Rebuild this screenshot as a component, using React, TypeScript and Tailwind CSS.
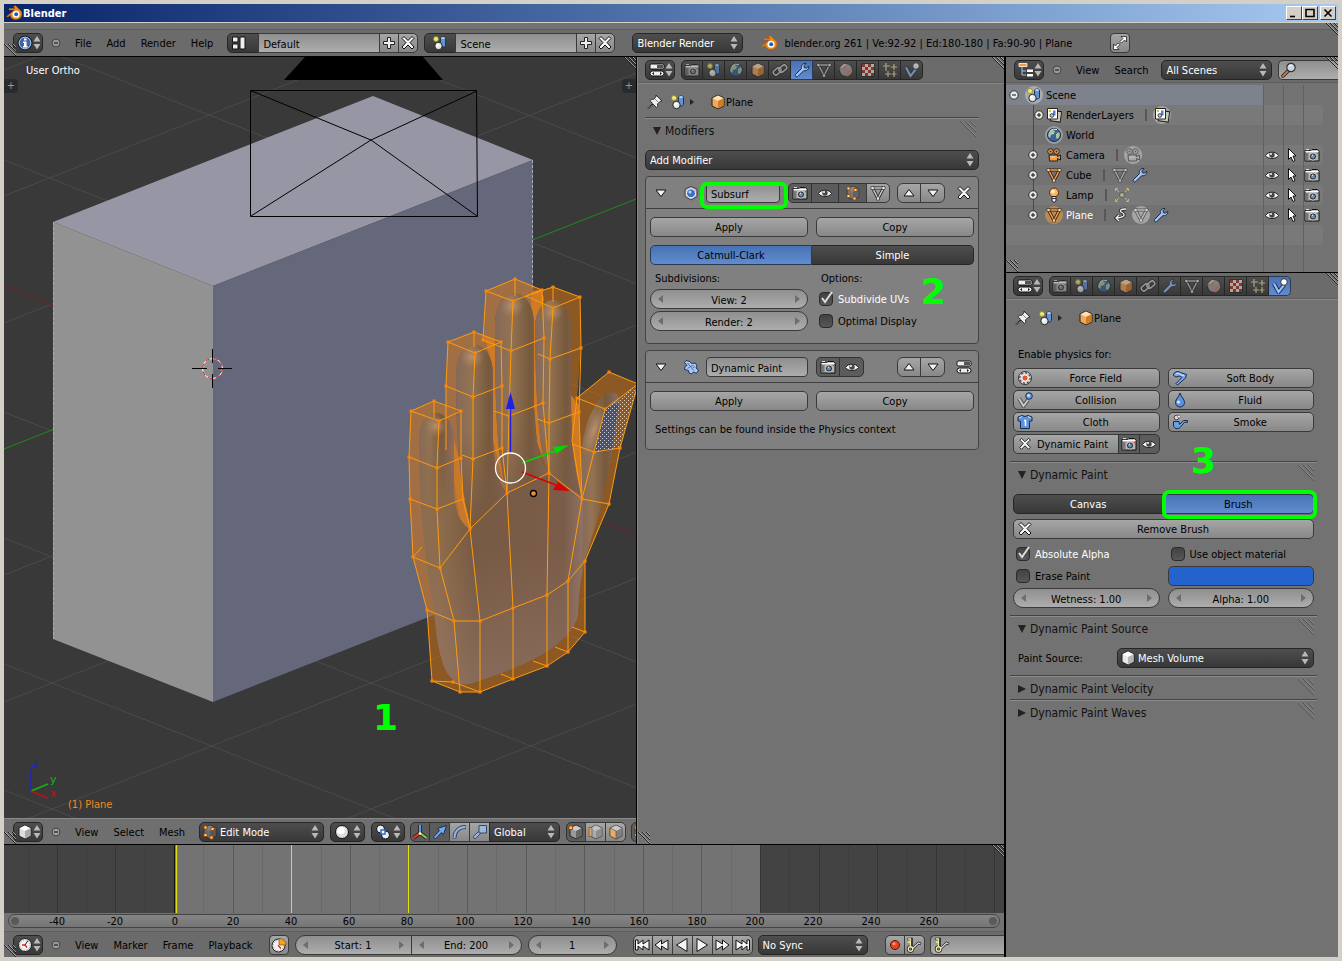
import { useState } from "react";
import type { ReactNode } from "react";
import clsx from "clsx";

const RAISED = "h-5 border border-[#3a3a3a] bg-linear-to-b from-[#a6a6a6] to-[#888888]";
const DARK = "h-5 border border-[#262626] bg-linear-to-b from-[#4e4e4e] to-[#383838]";
const FIELD = "h-5 border border-[#3a3a3a] bg-linear-to-b from-[#8f8f8f] to-[#adadad] pt-0.5";
const ACTIVE = "h-5 border border-[#2a3a55] bg-linear-to-b from-[#4772b3] to-[#628cd0]";
const PRESSED = "h-5 border border-[#333333] bg-[#5c5c5c]";

function cube(top: string, left: string, right: string) {
  return (
    <>
      <path d="M8 1L14 4v8L8 15 2 12V4z" fill={left} stroke="#222" />
      <path d="M8 1.500L13.500 4.200 8 7 2.500 4.200z" fill={top} />
      <path d="M8 7l5.500-2.800v7.500L8 14.500z" fill={right} />
    </>
  );
}

const scene = (
  <>
    <circle cx="4" cy="4" r="2.500" fill="#f0ec70" stroke="#8a8630" strokeWidth=".8" />
    <path d="M8.500 3.500c0-2 5-2 5 0v7c0 2-5 2-5 0z" fill="#5f94d8" stroke="#25344c" />
    <path d="M9.500 3h3" stroke="#d5e6ff" strokeWidth="1.500" />
    <circle cx="6.500" cy="11" r="3.700" fill="#e8e8e8" stroke="#222" />
    <circle cx="5.500" cy="10" r="1.500" fill="#fff" />
  </>
);

const world = (
  <>
    <circle cx="8" cy="8" r="6.500" fill="#3b6494" stroke="#1d2b3d" />
    <path d="M3 5l3-2 3 1-1 3-3 1-1 3-2-2zM10 7l3-2 1 3-2 4-2-1z" fill="#a9c79a" />
    <path d="M4 4q3-3 7-1.500" stroke="#e5f1ff" fill="none" />
  </>
);

const photo = (
  <>
    <path d="M1 3.500h6l1-1h5.500l1.500 1.500v10H1z" fill="#b4b4b4" stroke="#111" />
    <path d="M1.500 4.500h13" stroke="#fff" strokeWidth="1.300" />
    <path d="M1.500 6h3v7.500h-3z" fill="#777" />
    <path d="M2 2.500h3" stroke="#ddd" />
    <circle cx="9" cy="9.500" r="3.600" fill="#333" stroke="#e4e4e4" strokeWidth=".8" />
    <circle cx="9" cy="9.500" r="1.900" fill="#6f8fb4" />
    <path d="M7.800 8.800l1.200-1" stroke="#fff" />
    <circle cx="13.500" cy="6.500" r=".8" fill="#d44" />
  </>
);

const wrench = (
  <path
    d="M1.500 12.500l6-6c-.8-3 1.500-5.500 4.500-5l-2 2.300.4 2 2.100.4L14.700 4c.6 3-2 5.400-4.900 4.600l-6 6c-1.600 1-3.300-.6-2.300-2.100z"
    fill="#9fc2f3"
    stroke="#1b2c47"
  />
);

function mesh(line: string, dot: string) {
  return (
    <>
      <path d="M2.500 3h11L8 13.500z" fill="none" stroke="#222" strokeWidth="3" strokeLinejoin="round" />
      <path d="M2.500 3h11L8 13.500z" fill="none" stroke={line} strokeWidth="1.500" />
      <path d="M1 1.500h3v3H1zM12 1.500h3v3h-3zM6.500 12h3v3h-3z" fill={dot} stroke="#222" strokeWidth=".6" />
    </>
  );
}

const layers = (
  <>
    <path d="M5 4h10v10.500H5z" fill="#c8c8b8" stroke="#222" transform="rotate(8 10 9)" />
    <path d="M1.500 1.500h10v10.500h-10z" fill="#fff" stroke="#222" />
    <circle cx="4" cy="4" r="1.300" fill="#e5c13a" />
    <path d="M7 3.500h2.500v5H7z" fill="#4a80cf" />
    <circle cx="5.800" cy="8.500" r="1.800" fill="#ccc" stroke="#333" />
  </>
);

function movie(c: string) {
  return (
    <>
      <circle cx="4.500" cy="4.500" r="2.800" fill={c} stroke="#222" />
      <circle cx="10.500" cy="4.500" r="2.800" fill={c} stroke="#222" />
      <path d="M3 8h8.500v1.500l3-1.500v5l-3-1.500V14H3.500z" fill={c} stroke="#222" />
      <circle cx="4.500" cy="4.500" r="1" fill="#333" />
      <circle cx="10.500" cy="4.500" r="1" fill="#333" />
      <path d="M4.500 10h5" stroke="#fff" opacity=".6" />
    </>
  );
}

const editCube = (
  <>
    <g opacity=".6">{cube("#aaa", "#888", "#666")}</g>
    <path d="M2 2h3v3H2zM9 3.500h3v3H9zM2 9.500h3v3H2zM8 12h3v3H8z" fill="#ffd9a0" stroke="#a34b00" />
  </>
);

const ICONS: Record<string, ReactNode> = {
  scene,
  world,
  photo,
  wrench,
  layers,
  editCube,
  blender: (
    <>
      <path d="M.5 11.500L8.500 5H3V3.500h6L7.500 1.500l2-.8L15 6c2.500 4-.5 8.500-5 8.500-3.500 0-5.500-2-5.500-4.500L2 12z" fill="#f08a1c" stroke="#b2560a" strokeWidth=".5" />
      <circle cx="10" cy="9.300" r="3.500" fill="#fff" />
      <circle cx="10.200" cy="9.200" r="2" fill="#1f5fb0" />
    </>
  ),
  info: (
    <>
      <circle cx="8" cy="8" r="7" fill="#41659c" stroke="#10192a" />
      <circle cx="8" cy="8" r="5.800" fill="none" stroke="#a9bfe2" />
      <path d="M7 3.500h2.500v2H7zM6 6.500h3.500v4.500h1v1.500H6V11h1V8H6z" fill="#fff" />
    </>
  ),
  tree: (
    <>
      <path d="M4 5v8h4M4 9h4" fill="none" stroke="#a9bfe2" />
      <path d="M1 1.500h8v3H1z" fill="#f79a3a" stroke="#fff" strokeWidth=".8" />
      <path d="M9 7.500h6v2.500H9zM9 12h6v2.500H9z" fill="#fff" />
    </>
  ),
  sliders: (
    <>
      <rect x="1" y="2" width="14" height="5" rx="1.500" fill="#eee" stroke="#111" />
      <path d="M8 3h6v3H8z" fill="#555" />
      <rect x="1" y="9" width="14" height="5" rx="2.500" fill="#eee" stroke="#111" />
      <path d="M5 10v3l-2-1.500zM11 10v3l2-1.500z" fill="#111" />
    </>
  ),
  clock: (
    <>
      <circle cx="8" cy="8" r="6.500" fill="#f2f2f2" stroke="#222" />
      <circle cx="8" cy="8" r="5.200" fill="none" stroke="#888" strokeDasharray="1 1.700" />
      <path d="M8 8l3-4.500" stroke="#222" />
      <path d="M8 8l2 2.500M8 8H5" stroke="#d22" strokeWidth="1.300" />
    </>
  ),
  clockRange: (
    <>
      <circle cx="7.500" cy="8.500" r="6.500" fill="#f2f2f2" stroke="#222" />
      <circle cx="7.500" cy="8.500" r="5.200" fill="none" stroke="#888" strokeDasharray="1 1.700" />
      <path d="M8 8V1.500c4 0 7 2.500 7 6.500z" fill="#f9a11b" stroke="#6b4200" strokeWidth=".6" />
      <path d="M7 8.500l3 3" stroke="#d22" strokeWidth="1.300" />
    </>
  ),
  view3d: cube("#fff", "#ddd", "#a8a8a8"),
  object: cube("#ffe0b3", "#f3a75a", "#d37c26"),
  layout: (
    <path d="M1.500 2h5.500v5H1.500zM1.500 9h5.500v5H1.500zM9 2h5v12H9z" fill="#eee" stroke="#111" strokeWidth="1" />
  ),
  plus: <path d="M6.500 2.500h3v4h4v3h-4v4h-3v-4h-4v-3h4z" fill="#eee" stroke="#222" />,
  cross: (
    <path d="M2 3.500L4 1.500l4 4 4-4 2 2-4 4 4 4.500-2 2-4-4-4 4-2-2 4-4.500z" fill="#f4f4f4" stroke="#111" />
  ),
  full: (
    <path d="M9 1.500h5.500V7l-2-2-3 3L8 6.500l3-3zM1.500 9l2 2 2.500-3L8 9.500l-3 3 2 2H1.500z" fill="#fff" stroke="#222" strokeWidth=".8" />
  ),
  link: (
    <>
      <g fill="none" stroke="#222" strokeWidth="3.600">
        <rect x="1" y="7" width="8.500" height="5" rx="2.500" transform="rotate(-40 5 9.500)" />
        <rect x="6.500" y="4" width="8.500" height="5" rx="2.500" transform="rotate(-40 11 6.500)" />
      </g>
      <g fill="none" stroke="#ccc" strokeWidth="1.600">
        <rect x="1" y="7" width="8.500" height="5" rx="2.500" transform="rotate(-40 5 9.500)" />
        <rect x="6.500" y="4" width="8.500" height="5" rx="2.500" transform="rotate(-40 11 6.500)" />
      </g>
    </>
  ),
  mesh: mesh("#ccc", "#eee"),
  meshOrange: mesh("#ff9d45", "#ffd5a5"),
  material: (
    <>
      <circle cx="8" cy="8" r="6.500" fill="#a5a5a5" stroke="#222" />
      <path d="M8 8V1.500A6.500 6.500 0 0 0 1.500 8zM8 8h6.500A6.500 6.500 0 0 1 8 14.500z" fill="#c98a80" />
      <path d="M3.500 6q1-3 4-3.500" stroke="#fff" fill="none" />
    </>
  ),
  texture: (
    <>
      <path d="M1.500 1.500h13v13h-13z" fill="#eee" stroke="#222" />
      <path d="M2 2h3v3H2zM8 2h3v3H8zM5 5h3v3H5zM11 5h3v3h-3zM2 8h3v3H2zM8 8h3v3H8zM5 11h3v3H5zM11 11h3v3h-3z" fill="#b0301c" />
    </>
  ),
  particles: (
    <path d="M4 1v8M1 4h7M12 2v6M9 5h6M6 9v6M3 12h6M12 9v6M9.500 12h5" stroke="#efe3a0" strokeWidth="1.200" />
  ),
  physics: (
    <>
      <path d="M2 5.500L6.500 14 12 7" fill="none" stroke="#1d2b45" strokeWidth="4" />
      <path d="M2 5.500L6.500 14 12 7" fill="none" stroke="#9dc0f5" strokeWidth="2.200" />
      <circle cx="12" cy="4" r="3.300" fill="#fff" stroke="#333" />
    </>
  ),
  pin: (
    <>
      <path d="M9 1l6 6-1.800.3-2.700 2.700c.5 1.500 0 2.500-1 3.500L6 10l-4.500 5L1 14.500 5.500 9.500 3 6.500c1-1 2-1.500 3.500-1L9 2.800z" fill="#eee" stroke="#222" strokeWidth=".9" />
      <path d="M8 5l3.500 3.500" stroke="#888" />
    </>
  ),
  camera: movie("#f59b45"),
  cameraData: movie("#aaa"),
  lamp: (
    <>
      <circle cx="8" cy="5.500" r="4.500" fill="#ffb567" stroke="#5a2d00" />
      <circle cx="7" cy="4.500" r="1.700" fill="#fff0d8" />
      <path d="M6 9.500h4V14l-2 1.500L6 14z" fill="#eee" stroke="#222" />
      <path d="M6 11.500h4" stroke="#333" />
    </>
  ),
  lampData: (
    <>
      <circle cx="8" cy="8" r="2.500" fill="#dcd790" stroke="#444" />
      <path d="M1.500 4V1.500H4M12 1.500h2.500V4M14.500 12v2.500H12M4 14.500H1.500V12M2 2l3 3M14 2l-3 3M14 14l-3-3M2 14l3-3" stroke="#e0da90" fill="none" />
    </>
  ),
  curve: (
    <>
      <path d="M13 2C7 2 6 4 9 5.500s4 5-6 5.500M6 8l-3 3 3 3" fill="none" stroke="#222" strokeWidth="3" />
      <path d="M13 2C7 2 6 4 9 5.500s4 5-6 5.500M6 8l-3 3 3 3" fill="none" stroke="#eee" strokeWidth="1.300" />
    </>
  ),
  eye: (
    <>
      <path d="M1.500 8.500C4 4 12 4 14.500 8.500 12 12.500 4 12.500 1.500 8.500z" fill="#f4f4f4" stroke="#222" />
      <circle cx="8" cy="8" r="2.700" fill="#444" />
      <circle cx="7" cy="7" r="1" fill="#fff" />
    </>
  ),
  cursor: <path d="M4.500 1.500v11L7 10l2 4.500 2-1-2-4.500h3z" fill="#fff" stroke="#111" />,
  search: (
    <>
      <path d="M7 9l-5 5" stroke="#222" strokeWidth="3.500" strokeLinecap="round" />
      <path d="M6.500 9.500L2 14" stroke="#c9714e" strokeWidth="2" strokeLinecap="round" />
      <circle cx="10" cy="5.500" r="4.200" fill="#cfd6df" stroke="#333" strokeWidth="1.200" />
      <path d="M8 4.500q1-1.500 3-1.500" stroke="#fff" fill="none" />
    </>
  ),
  subsurf: (
    <>
      <path d="M8 1.500L14 4v7.500L8 15l-6-3.500V4z" fill="#b5b5b5" stroke="#444" />
      <circle cx="8" cy="8.300" r="4.500" fill="#3a72c8" stroke="#fff" />
      <circle cx="7" cy="7" r="1.500" fill="#bcd8ff" />
    </>
  ),
  splash: (
    <>
      <path d="M3 1.500l4 1 1.500 2 4-.5 1.500 3-1 2 2.500 2-2 3.500-3-1.500-2 2-2.500-1-.5-2.500-4-1 .5-3 2-1-2.500-3z" fill="#a9c6f2" stroke="#22365a" />
      <path d="M4.500 4l3 3.500 3-1M7.500 7.500l3 4M7.500 7.500l-3 2M10 9l2-1.500" stroke="#4a6ca5" fill="none" />
    </>
  ),
  up: <path d="M8 4.500l5 6.500H3z" fill="#f4f4f4" stroke="#111" />,
  down: <path d="M3 5h10l-5 6.500z" fill="#f4f4f4" stroke="#111" />,
  sphere: (
    <>
      <circle cx="8" cy="8" r="6.500" fill="#ddd" stroke="#111" />
      <circle cx="7" cy="6.500" r="3.800" fill="#fff" />
    </>
  ),
  pivot: (
    <>
      <circle cx="5.500" cy="5" r="4" fill="#eee" stroke="#111" />
      <circle cx="10.500" cy="11" r="4" fill="#eee" stroke="#111" />
      <path d="M6 6h4v4H6z" fill="#fff" stroke="#2f6bd0" strokeWidth="1.500" />
    </>
  ),
  axes: (
    <>
      <path d="M8 1v8L1.500 14M8 9l6.500 5" stroke="#222" strokeWidth="3.600" fill="none" />
      <path d="M8 1v8" stroke="#5f9af0" strokeWidth="2" />
      <path d="M8 9l-6.500 5" stroke="#e8402a" strokeWidth="2.200" />
      <path d="M8 9l6.500 5" stroke="#8fd52a" strokeWidth="2.200" />
      <circle cx="8" cy="9.500" r="1.200" fill="#fff" />
    </>
  ),
  arrow: <path d="M1.500 13l6-6.500-2-2L14.500 1.500l-3 9-2-2-6 6.500z" fill="#72a7ec" stroke="#16305a" />,
  arc: (
    <>
      <path d="M2.500 14.500C2.500 7 7 3 14 3" fill="none" stroke="#33486a" strokeWidth="3.800" />
      <path d="M2.500 14C2.500 7 7 3 13.500 3" fill="none" stroke="#9db6dc" strokeWidth="2" />
    </>
  ),
  scale: (
    <>
      <path d="M1 13l7-7 2 2-7 7z" fill="#9db6dc" stroke="#33486a" />
      <path d="M7 1.500h7.500V9H7z" fill="#9db6dc" stroke="#33486a" />
    </>
  ),
  vertexSel: (
    <>
      {cube("#ccc", "#999", "#666")}
      <path d="M1 2h3.500v3.500H1z" fill="#ffc27a" stroke="#a34b00" />
    </>
  ),
  edgeSel: (
    <>
      <g opacity=".6">{cube("#ddd", "#bbb", "#888")}</g>
      <path d="M1 3.500h3v9H1z" fill="#e0a565" stroke="#7a4a1a" strokeWidth=".7" />
    </>
  ),
  faceSel: (
    <>
      <g opacity=".7">{cube("#ddd", "#bbb", "#777")}</g>
      <path d="M2 4l6 3v8l-6-3z" fill="#e3ad72" stroke="#7a4a1a" strokeWidth=".7" />
    </>
  ),
  first: <path d="M.5 3H3v4l5-4v4l6-4v10L8 9v4L3 9v4H.5z" fill="#f4f4f4" stroke="#111" />,
  prevKey: <path d="M7.500 3v4L14 3v10L7.500 9v4L1 8z" fill="#f4f4f4" stroke="#111" />,
  playBack: <path d="M13 1.500v13L2.500 8z" fill="#f4f4f4" stroke="#111" />,
  play: <path d="M3 1.500v13L13.500 8z" fill="#f4f4f4" stroke="#111" />,
  nextKey: <path d="M8.500 3v4L2 3v10l6.500-4v4L15 8z" fill="#f4f4f4" stroke="#111" />,
  last: <path d="M15.500 3H13v4L8 3v4L2 3v10l6-4v4l5-4v4h2.500z" fill="#f4f4f4" stroke="#111" />,
  record: (
    <>
      <circle cx="8" cy="8" r="4.500" fill="#e8431a" stroke="#5a1200" />
      <circle cx="7" cy="6.800" r="1.500" fill="#ff9a70" />
    </>
  ),
  keys: (
    <>
      <path d="M1.500 2h4v8" fill="none" stroke="#222" strokeWidth="2.600" />
      <path d="M6.500 11.500l6-5.500 2.500 1" fill="none" stroke="#222" strokeWidth="2.600" />
      <circle cx="4.500" cy="12" r="2.200" fill="none" stroke="#222" strokeWidth="3" />
      <path d="M2 2h2.500v8M2 5h2" fill="none" stroke="#efe9a8" strokeWidth="1.300" />
      <path d="M6.500 11.500l6-5.500 2 1" fill="none" stroke="#ddd" strokeWidth="1.200" />
      <circle cx="4.500" cy="12" r="2.200" fill="none" stroke="#efe9a8" strokeWidth="1.400" />
    </>
  ),
  force: (
    <>
      <circle cx="8" cy="8" r="6.500" fill="#ddd" stroke="#333" />
      <circle cx="8" cy="8" r="5.200" fill="none" stroke="#555" strokeWidth="1.500" strokeDasharray="2 2" />
      <circle cx="8" cy="8" r="3" fill="#e5532d" stroke="#fff" strokeWidth=".8" />
    </>
  ),
  collision: (
    <>
      <path d="M2 6.500L6.500 14 11 8" fill="none" stroke="#444" strokeWidth="3.600" />
      <path d="M2 6.500L6.500 14 11 8" fill="none" stroke="#ccc" strokeWidth="2" />
      <circle cx="12" cy="4" r="3.300" fill="#6b9fe6" stroke="#1d2b45" />
      <circle cx="11.500" cy="3.500" r="1.200" fill="#dcebff" />
    </>
  ),
  cloth: (
    <>
      <path d="M5 1.500q3 2 6 0L15 3v4h-2.500v7.500h-9V7H1V3z" fill="#5b93dd" stroke="#152d52" />
      <path d="M7 6.500h1.500V12" stroke="#fff" strokeWidth="1.500" fill="none" />
      <path d="M2 4l3-1.500M14 4l-3-1.500" stroke="#cfe2ff" />
    </>
  ),
  softBody: (
    <>
      <path d="M1.500 4C3 1.500 7 1 8.500 2.500l6 2L13.500 8l-8 7-1.500-1.500L10 7.500 7.500 6 4 7 1.500 5.500z" fill="#7aaae8" stroke="#152d52" />
      <path d="M4 3.500q3-1 5 1.500l3 .5" stroke="#d8e8ff" fill="none" />
    </>
  ),
  fluid: (
    <>
      <path d="M8 1C9 5 12.500 7 12.500 10.500a4.500 4.500 0 0 1-9 0C3.500 7 7 5 8 1z" fill="#5b93dd" stroke="#152d52" />
      <circle cx="6.500" cy="10" r="1.600" fill="#d8e8ff" />
    </>
  ),
  smoke: (
    <>
      <circle cx="4.500" cy="3.500" r="2.300" fill="#ddd" stroke="#444" />
      <circle cx="7" cy="2.500" r="1.500" fill="#eee" stroke="#555" strokeWidth=".6" />
      <path d="M1.500 7.500H7l.5 3 4-4h4v1.800h-3L8 13.500c-2 2-6.500 1.500-6.500-2.500z" fill="#6b9fe6" stroke="#152d52" />
    </>
  ),
  meshVolume: cube("#fff", "#e8e8e8", "#b5b5b5"),
};

function Icon({ name, className }: { name: string; className?: string }) {
  return (
    <svg viewBox="0 0 16 16" className={clsx("size-4 shrink-0", className)} aria-hidden="true">
      {ICONS[name]}
    </svg>
  );
}

function UpDown({ className }: { className?: string }) {
  return (
    <svg viewBox="0 0 8 14" className={clsx("pointer-events-none h-3.5 w-2 shrink-0", className)} aria-hidden="true">
      <path d="M4 0l3.500 5.500h-7zM.5 8h7L4 13.500z" fill="#b8b8b8" />
    </svg>
  );
}

// Diagonal ridges used for dragging and splitting areas.
function Ridges({ className }: { className?: string }) {
  return (
    <svg viewBox="0 0 16 16" className={clsx("pointer-events-none size-4", className)} aria-hidden="true">
      <path d="M0 0l16 16M5 0l11 11M10 0l6 6" stroke="#3c3c3c" />
      <path d="M1 0l15 15M6 0l10 10M11 0l5 5" stroke="#a5a5a5" strokeWidth=".7" />
    </svg>
  );
}

function CornerRidges({ className }: { className?: string }) {
  return (
    <svg viewBox="0 0 12 12" className={clsx("pointer-events-none absolute z-10 size-3", className)} aria-hidden="true">
      <path d="M0 0l12 12M4 0l8 8M8 0l4 4" stroke="#222" />
      <path d="M1 0l11 11M5 0l7 7M9 0l3 3" stroke="#b0b0b0" strokeWidth=".8" />
    </svg>
  );
}

function EditorType({ icon, label }: { icon: string; label: string }) {
  return (
    <button aria-label={label} className={clsx(DARK, "flex w-[30px] shrink-0 items-center justify-between rounded-[5px] pl-[3px] pr-[2px]")}>
      <Icon name={icon} />
      <UpDown />
    </button>
  );
}

function CollapseMenus() {
  return (
    <button aria-label="Collapse menus" className="ml-2 mr-3 size-3 shrink-0">
      <svg viewBox="0 0 12 12" className="size-3">
        <circle cx="5" cy="6" r="4" fill="#999" stroke="#444" />
        <path d="M3 6h4" stroke="#222" strokeWidth="1.200" />
      </svg>
    </button>
  );
}

function Menus({ items }: { items: string[] }) {
  return (
    <nav className="flex shrink-0 gap-[15px] pt-0.5">
      {items.map((m) => <button key={m}>{m}</button>)}
    </nav>
  );
}

function Menu({ label, value, icon, className }: { label: string; value: string; icon?: string; className?: string }) {
  return (
    <span className={clsx("relative flex", className)}>
      <select
        aria-label={label}
        className={clsx(DARK, "w-full appearance-none pt-0.5 text-white", icon ? "pl-5" : "pl-1", label === "Orientation" ? "rounded-r-[5px]" : "rounded-[5px]")}
      >
        <option>{value}</option>
      </select>
      {icon && <Icon name={icon} className="pointer-events-none absolute left-[3px] top-[2px]" />}
      <UpDown className="absolute right-[5px] top-[3px]" />
    </span>
  );
}

function DataBlock({ icon, label, value }: { icon: string; label: string; value: string }) {
  return (
    <div className="flex w-[191px] shrink-0">
      <button aria-label={`Browse ${label}`} className={clsx(DARK, "flex w-8 shrink-0 items-center justify-center rounded-l-[5px]")}>
        <Icon name={icon} className={icon === "layout" ? "-translate-x-1" : ""} />
      </button>
      <input aria-label={label} defaultValue={value} className={clsx(FIELD, "-ml-px w-full min-w-0 px-1")} />
      <button aria-label={`Add ${label}`} className={clsx(RAISED, "-ml-px flex w-5 shrink-0 items-center justify-center")}>
        <Icon name="plus" />
      </button>
      <button aria-label={`Remove ${label}`} className={clsx(RAISED, "-ml-px flex w-5 shrink-0 items-center justify-center rounded-r-[5px]")}>
        <Icon name="cross" className="size-3.5" />
      </button>
    </div>
  );
}

function NumberField({ label, value, className }: { label: string; value: string; className?: string }) {
  return (
    <span className={clsx("relative flex", className)}>
      <input aria-label={label} defaultValue={value} className={clsx(FIELD, "w-full min-w-0 rounded-[inherit] text-center")} />
      <svg viewBox="0 0 5 8" className="absolute left-2 top-1.5 h-2 w-[5px]"><path d="M5 0v8L0 4z" fill="#6d6d6d" /></svg>
      <svg viewBox="0 0 5 8" className="absolute right-2 top-1.5 h-2 w-[5px]"><path d="M0 0v8l5-4z" fill="#6d6d6d" /></svg>
    </span>
  );
}

function Check({ label, on = false }: { label: string; on?: boolean }) {
  const [checked, setChecked] = useState(on);
  return (
    <label className={clsx("flex h-5 items-center gap-[5px] whitespace-nowrap", checked && "text-white")}>
      <span className="relative flex">
        <input
          type="checkbox"
          checked={checked}
          onChange={(e) => setChecked(e.target.checked)}
          className="size-3.5 appearance-none rounded-[4px] border border-[#2a2a2a] bg-linear-to-b from-[#424242] to-[#575757]"
        />
        {checked && (
          <svg viewBox="0 0 14 14" className="pointer-events-none absolute inset-0 size-3.5 overflow-visible">
            <path d="M3 6l3 4 7-10" fill="none" stroke="#dcdcdc" strokeWidth="2" />
          </svg>
        )}
      </span>
      <span className="pt-0.5">{label}</span>
    </label>
  );
}

function TextButton({ children, icon, className }: { children: ReactNode; icon?: string; className?: string }) {
  return (
    <button className={clsx(RAISED, "flex min-w-0 items-center rounded-[5px]", className)}>
      {icon && <Icon name={icon} className="ml-[3px]" />}
      <span className="flex-1 pt-0.5 text-center">{children}</span>
    </button>
  );
}

const TABS = ["photo", "scene", "world", "object", "link", "wrench", "mesh", "material", "texture", "particles", "physics"];

function PropertiesHeader({ active }: { active: string }) {
  return (
    <header className="flex h-[26px] items-center gap-1.5 border-b border-[#5e5e5e] bg-[#6b6b6b] px-[7px] pt-px shadow-[0_1px_0_#868686]">
      <EditorType icon="sliders" label="Editor type" />
      <div role="tablist" className="flex">
        {TABS.map((t, i) => (
          <button
            key={t}
            role="tab"
            aria-label={t}
            aria-selected={t === active}
            className={clsx(
              t === active ? ACTIVE : DARK,
              "flex w-[22px] items-center justify-center",
              i > 0 && "border-l-0",
              i === 0 && "rounded-l-[5px]",
              i === TABS.length - 1 && "rounded-r-[5px]",
            )}
          >
            <Icon name={t} className={t === active ? "" : "opacity-60"} />
          </button>
        ))}
      </div>
    </header>
  );
}

function ContextPath() {
  return (
    <div className="flex h-[34px] items-center pl-[9px] pt-1">
      <Icon name="pin" />
      <Icon name="scene" className="ml-[7px]" />
      <svg viewBox="0 0 4 6" className="ml-1 h-1.5 w-1"><path d="M0 0v6l4-3z" fill="#222" /></svg>
      <Icon name="object" className="ml-4" />
      <span className="pt-px">Plane</span>
    </div>
  );
}

function PanelTitle({ title, open = true }: { title: string; open?: boolean }) {
  return (
    <div className="flex h-6 items-center justify-between border-t border-[#444] pr-[3px] pt-[3px] shadow-[inset_0_1px_0_#8c8c8c]">
      <button className="flex items-center gap-1 pl-2 text-[12px] text-[#111]">
        <svg viewBox="0 0 8 8" className="size-2">
          <path d={open ? "M0 0h8L4 8z" : "M0 0v8l8-4z"} fill="#222" />
        </svg>
        {title}
      </button>
      <Ridges className="mb-1 opacity-60" />
    </div>
  );
}

function MoveButtons() {
  return (
    <div className="flex">
      <button aria-label="Move up" className={clsx(RAISED, "flex w-6 items-center justify-center rounded-l-[6px]")}><Icon name="up" className="size-3.5" /></button>
      <button aria-label="Move down" className={clsx(RAISED, "-ml-px flex w-[25px] items-center justify-center rounded-r-[6px]")}><Icon name="down" className="size-3.5" /></button>
    </div>
  );
}

function IconToggle({ name, pressed = true, className }: { name: string; pressed?: boolean; className?: string }) {
  return (
    <button aria-label={name} aria-pressed={pressed} className={clsx(pressed ? PRESSED : RAISED, "flex shrink-0 items-center justify-center", className)}>
      <Icon name={name} />
    </button>
  );
}

function ModifierHeader({ icon, name, nameWidth, children, end }: { icon: string; name: string; nameWidth: string; children: ReactNode; end: string }) {
  return (
    <div className="flex h-8 items-center border-b border-[#3f3f3f] pl-[7px] pr-1.5 pt-px">
      <button aria-label={`Collapse ${name}`}><Icon name="down" className="size-3.5" /></button>
      <Icon name={icon} className="ml-[14px]" />
      <input aria-label="Modifier name" defaultValue={name} className={clsx(FIELD, "ml-[7px] shrink-0 rounded-[4px] px-1", nameWidth)} />
      <div className="ml-2 flex">{children}</div>
      <div className="ml-auto flex items-center gap-[11px]">
        <MoveButtons />
        <button aria-label="Modifier action"><Icon name={end} /></button>
      </div>
    </div>
  );
}

function Modifiers() {
  return (
    <section className="relative w-[367px] shrink-0 border-l border-[#8a8a8a] bg-[#727272]">
      <PropertiesHeader active="wrench" />
      <ContextPath />
      <div className="pl-[7px] pr-[25px]">
        <PanelTitle title="Modifiers" />
        <Menu label="Add Modifier" value="Add Modifier" className="mt-[9px]" />

        <div className="relative mt-1.5 rounded-[4px] border border-[#444] bg-[#808080] pb-3">
          <ModifierHeader icon="subsurf" name="Subsurf" nameWidth="w-[74px]" end="cross">
            <IconToggle name="photo" className="w-6 rounded-l-[5px]" />
            <IconToggle name="eye" className="-ml-px w-7" />
            <IconToggle name="editCube" className="-ml-px w-[29px]" />
            <IconToggle name="mesh" pressed={false} className="-ml-px w-6 rounded-r-[5px]" />
          </ModifierHeader>
          <div className="pointer-events-none absolute left-[54px] top-[5px] h-[27px] w-[88px] rounded-[7px] border-4 border-[#00ff00]" />
          <div className="grid grid-cols-2 gap-x-2 px-1 pt-2">
            <TextButton>Apply</TextButton>
            <TextButton>Copy</TextButton>
          </div>
          <div className="mt-2 grid grid-cols-2 px-1">
            <button className={clsx(ACTIVE, "rounded-l-[5px] pt-0.5")}>Catmull-Clark</button>
            <button className={clsx(DARK, "rounded-r-[5px] border-l-0 pt-0.5 text-white")}>Simple</button>
          </div>
          <div className="mt-1 grid grid-cols-2 gap-x-2 gap-y-0.5 px-1">
            <span className="flex h-[18px] items-center pl-[5px] pt-0.5">Subdivisions:</span>
            <span className="flex h-[18px] items-center pl-[5px] pt-0.5">Options:</span>
            <NumberField label="View" value="View: 2" className="rounded-full" />
            <div className="pl-[3px]"><Check label="Subdivide UVs" on /></div>
            <NumberField label="Render" value="Render: 2" className="rounded-full" />
            <div className="pl-[3px]"><Check label="Optimal Display" /></div>
          </div>
          <div className="pointer-events-none absolute left-[275px] top-[94px] text-[36px] font-bold leading-[42px] text-[#00ff00] [font-family:'DejaVu_Sans',sans-serif]">2</div>
        </div>

        <div className="mt-1.5 rounded-[4px] border border-[#444] bg-[#808080] pb-2.5">
          <ModifierHeader icon="splash" name="Dynamic Paint" nameWidth="w-[102px]" end="sliders">
            <IconToggle name="photo" className="w-6 rounded-l-[5px]" />
            <IconToggle name="eye" className="-ml-px w-[25px] rounded-r-[5px]" />
          </ModifierHeader>
          <div className="grid grid-cols-2 gap-x-2 px-1 pt-2">
            <TextButton>Apply</TextButton>
            <TextButton>Copy</TextButton>
          </div>
          <p className="mt-2 flex h-5 items-center whitespace-nowrap pl-[9px] pt-0.5">Settings can be found inside the Physics context</p>
        </div>
      </div>
      <CornerRidges className="right-0 top-0" />
      <CornerRidges className="bottom-0 left-0" />
    </section>
  );
}

// Lines of the floor grid, given by their height at the left edge.
const GRID_DOWN = [-218, -92, 34, 160, 412, 538, 664, 790];
const GRID_UP = [70, 196, 323, 575, 702, 828, 954, 1080];

const HAND_OUTLINE =
  "M411 411L434 401 461 411 462 458 463 499 470 529 474 459 447 450 446 386 448 342 474 332 484 335 486 291 515 279 542 290 553 287 580 297 581 348 577 398 609 372 638 384 620 448 609 504 585 561V632L568 652 547 666 513 679 480 692H460L432 681 427 610 413 557 410 499 409 457z";

const HAND_WIRE =
  "M411 411L434 401 461 411 439 421zM411 411L409 457 410 499 413 557 427 610 432 681M439 421L437 468V509L440 568 454 621 460 692M461 411V458L463 499 470 529M434 401V418M409 457L437 468 461 458M410 499L437 509 463 499M413 557L440 568 470 529M413 557L422 547" +
  "M448 342L474 332 501 342 475 353zM448 342L446 386V450M475 353L473 397V459L470 529M501 342L502 386V448L507 493M446 386L473 397 502 386M462 455L473 459 502 448M474 332V347" +
  "M486 291L515 279 542 290 513 301zM486 291L483 340M513 301L511 351 509 416 507 493M542 290L544 338 543 403 549 473M483 340L511 351 544 338M494 411L509 416 543 403M515 279V296" +
  "M526 296L553 287 580 297 553 308zM553 308L550 359 549 423V473M580 297L581 348 579 412 582 499M538 354L550 359 581 348M537 419L549 423 579 412M553 287V302" +
  "M577 398L609 372 638 384 605 409zM577 398L572 440 582 499M605 409L594 452 582 499M638 384L620 448 609 504 585 561M572 444L594 452 620 448M470 529L507 493 549 473 582 499 609 504" +
  "M470 529L480 621V692M507 493L513 608V679M549 473L547 595V666M582 499L568 581V652M585 561V632M427 610L454 621H480L513 608 547 595 568 581 585 561M432 681L460 692H480L513 679 547 666 568 652 585 632M432 681L453 682 480 692M501 674L513 679M533 661L547 666M555 647L568 652M572 627L585 632";

const HAND_VERTS = [
  [411, 411], [434, 401], [461, 411], [439, 421], [409, 457], [437, 468], [461, 458], [410, 499], [437, 509], [463, 499],
  [413, 557], [440, 568], [470, 529], [427, 610], [454, 621], [480, 621], [432, 681], [453, 682], [460, 692], [480, 692],
  [448, 342], [474, 332], [501, 342], [475, 353], [446, 386], [473, 397], [502, 386], [473, 459], [502, 448],
  [486, 291], [515, 279], [542, 290], [513, 301], [483, 340], [511, 351], [544, 338], [509, 416], [543, 403], [507, 493],
  [553, 287], [580, 297], [553, 308], [550, 359], [581, 348], [549, 423], [579, 412], [549, 473],
  [577, 398], [609, 372], [605, 409], [594, 452], [620, 448], [582, 499], [609, 504],
  [585, 561], [585, 632], [568, 581], [568, 652], [547, 595], [547, 666], [513, 608], [513, 679],
];

const PALM =
  "M419 440C419 404 453 404 454 440V494C456 520 466 528 470 529L489 510 493 480 507 493 532 480 549 473 571 470 583 497 600 500C592 540 580 560 578 615 570 648 520 668 470 684 446 688 438 660 434 610 424 560 419 500 419 440z";

function Scene3D() {
  return (
    <svg viewBox="4 57 632 761" preserveAspectRatio="xMidYMid slice" className="absolute inset-0 size-full" role="img" aria-label="3D view">
      <defs>
        <linearGradient id="finger">
          <stop offset="0" stopColor="#85695a" />
          <stop offset=".3" stopColor="#937352" />
          <stop offset=".65" stopColor="#76583c" />
          <stop offset="1" stopColor="#8b6e66" />
        </linearGradient>
        <linearGradient id="palm">
          <stop offset="0" stopColor="#8d6d50" />
          <stop offset=".12" stopColor="#8c6c4b" />
          <stop offset=".3" stopColor="#775a43" />
          <stop offset=".8" stopColor="#7a5c49" />
          <stop offset="1" stopColor="#a3867b" />
        </linearGradient>
        <linearGradient id="palmFade" x2="0" y2="1">
          <stop offset=".5" stopColor="#9a7b70" stopOpacity="0" />
          <stop offset="1" stopColor="#9a7b70" stopOpacity=".5" />
        </linearGradient>
        <linearGradient id="baseFade" gradientUnits="userSpaceOnUse" x1="0" y1="430" x2="0" y2="520">
          <stop offset="0" stopColor="#fff" />
          <stop offset="1" stopColor="#000" />
        </linearGradient>
        <mask id="fingerMask" maskUnits="userSpaceOnUse" x="400" y="270" width="240" height="420">
          <path d="M400 270h240v420H400z" fill="url(#baseFade)" />
        </mask>
        <radialGradient id="tip">
          <stop offset="0" stopColor="#b8906e" />
          <stop offset="1" stopColor="#a88262" stopOpacity="0" />
        </radialGradient>
        <pattern id="stipple" width="4" height="4" patternUnits="userSpaceOnUse">
          <path d="M0 0h1v1H0zM2 2h1v1H2z" fill="#fff" />
        </pattern>
      </defs>
      <g stroke="#4a4a4a">
        {GRID_DOWN.map((y) => <path key={y} d={`M4 ${y}l800 316`} />)}
        {GRID_UP.map((y) => <path key={y} d={`M4 ${y}l800 -316`} />)}
      </g>
      <path d="M4 286l632 249" stroke="#6b2226" />
      <path d="M4 449l632-250" stroke="#1f8a1f" />

      <path d="M284 80L305 57h118l20 23z" fill="#000" />
      <path d="M53 222L373 96l160 64-320 126z" fill="#9796a4" />
      <path d="M53 222l160 64v416L53 639z" fill="#929292" />
      <path d="M213 286l320-126v416L213 702z" fill="#65677b" />
      <path d="M53.500 222v417" stroke="#aaa9b5" strokeDasharray="3 2" />
      <path d="M532.500 160v130" stroke="#aaa9b5" strokeDasharray="3 2" />
      <path d="M250.500 90.500h226l1 126h-227zM250.500 90.500L371 140l106-49M371 140l106 76M371 140L251 216" fill="none" stroke="#000" />

      <path d={HAND_OUTLINE} fill="#e07710" fillOpacity=".5" />
      <path d="M484 335L501 342 502 448 507 493 500 470 493 440 492 365zM531 292l10-3 3 10-5 20 2 110 8 44-12-30-4-50zM571 395l8 10 3 94-10-30z" fill="#cf7a25" />
      <path d="M454 480V440l8 30 8 59-10-10z" fill="#cf7a25" />
      <path d={PALM} fill="url(#palm)" />
      <path d={PALM} fill="url(#palmFade)" />
      <path d="M454 440L446 452 457 458 462 500 470 529 458 515 454 494z" fill="#c0762f" opacity=".5" />
      <g mask="url(#fingerMask)">
        <path d="M419 440C419 404 453 404 454 440V500L425 560C420 520 419 480 419 440z" fill="url(#finger)" />
      </g>
      <path d="M456 375C456 335 493 335 493 375V440C494 470 500 485 507 493L472 528C462 500 456 450 456 375z" fill="#775a43" />
      <path d="M495 325C495 283 534 283 534 325V410C536 450 542 465 549 473L507 493C498 460 495 420 495 325z" fill="#775a43" />
      <path d="M535 330C535 290 571 290 571 330V410C572 460 578 485 583 497L549 473C540 460 536 410 535 330z" fill="#795b48" />
      <g mask="url(#fingerMask)" fill="url(#finger)">
        <path d="M456 375C456 335 493 335 493 375V440C494 470 500 485 507 493L472 528C462 500 456 450 456 375z" />
        <path d="M495 325C495 283 534 283 534 325V410C536 450 542 465 549 473L507 493C498 460 495 420 495 325z" />
        <path d="M535 330C535 290 571 290 571 330V410C572 460 578 485 583 497L549 473C540 460 536 410 535 330z" />
      </g>
      <path d="M583 497C578 470 580 430 594 408 605 388 620 388 619 402 616 430 610 470 600 510 594 530 588 550 582 570z" fill="url(#finger)" />
      <circle cx="436" cy="426" r="11" fill="url(#tip)" />
      <circle cx="472" cy="357" r="12" fill="url(#tip)" />
      <circle cx="512" cy="306" r="12" fill="url(#tip)" />
      <circle cx="552" cy="312" r="11" fill="url(#tip)" />
      <ellipse cx="594" cy="430" rx="8" ry="28" fill="url(#tip)" transform="rotate(20 594 430)" />
      <path d="M605 409L619 402 612 450 594 452z" fill="#4c5068" />
      <path d="M605 409L638 384 620 448 594 452z" fill="url(#stipple)" opacity=".7" />
      <path d={HAND_WIRE} fill="none" stroke="#ff9c0c" strokeLinejoin="round" />
      {HAND_VERTS.map(([x, y]) => <rect key={`${x}-${y}`} x={x - 1.5} y={y - 1.5} width="3" height="3" fill="#ff8500" />)}

      <path d="M510.500 454v-48" stroke="#2020e0" strokeWidth="1.500" />
      <path d="M506 409l4.500-17 4.500 17z" fill="#2020e0" />
      <path d="M522 463l33-12" stroke="#00d800" strokeWidth="1.500" />
      <path d="M553 447l16-2-13 9z" fill="#00d800" />
      <path d="M522 472l34 13" stroke="#d80000" strokeWidth="1.500" />
      <path d="M558 482l12 9-17-1z" fill="#d80000" />
      <circle cx="510.500" cy="468" r="15" fill="none" stroke="#fff" strokeWidth="1.300" />
      <circle cx="533.500" cy="493.500" r="3" fill="#e09440" stroke="#000" strokeWidth="1.300" />
      <circle cx="212.500" cy="368.500" r="10" fill="none" stroke="#fff" />
      <circle cx="212.500" cy="368.500" r="10" fill="none" stroke="#e01010" strokeDasharray="4 4" />
      <path d="M192 368.500h15M218 368.500h14M212.500 349v14M212.500 374v14" stroke="#000" />

      <path d="M31 791v-22" stroke="#2222cc" strokeWidth="1.500" />
      <path d="M31 791l17-7" stroke="#10b810" strokeWidth="1.500" />
      <path d="M31 791l17 7" stroke="#c01010" strokeWidth="1.500" />
      <g fontSize="11" fontFamily="DejaVu Sans, sans-serif">
        <text x="32" y="767" fill="#2222cc">z</text>
        <text x="50" y="783" fill="#10b810">y</text>
        <text x="50" y="797" fill="#c01010">x</text>
      </g>
      <text x="373" y="730" fontSize="36" fontWeight="bold" fontFamily="DejaVu Sans, sans-serif" fill="#00ff00">1</text>
    </svg>
  );
}

function Viewport() {
  return (
    <section className="flex min-w-0 flex-1 flex-col overflow-hidden border-r border-black">
      <div className="relative min-h-[420px] flex-1 overflow-hidden bg-[#393939]">
        <Scene3D />
        <span className="absolute left-[22px] top-[7px] text-white">User Ortho</span>
        <span className="absolute bottom-[6px] left-16 text-[#f08a1c]">(1) Plane</span>
        <button aria-label="Show tools" className="absolute left-0 top-[22px] flex h-3.5 w-3.5 items-center justify-center rounded-r-[4px] bg-[#2a2a2a] text-[#999]">+</button>
        <button aria-label="Show properties" className="absolute right-0 top-[22px] flex h-3.5 w-3.5 items-center justify-center rounded-l-[4px] bg-[#2a2a2a] text-[#999]">+</button>
        <CornerRidges className="right-0 top-0" />
      </div>
      <header className="relative flex h-[26px] shrink-0 items-center border-t border-[#8a8a8a] bg-[#6f6f6f] pl-[9px]">
        <EditorType icon="view3d" label="Editor type" />
        <CollapseMenus />
        <Menus items={["View", "Select", "Mesh"]} />
        <Menu label="Mode" value="Edit Mode" icon="editCube" className="ml-[14px] w-[125px] shrink-0" />
        <button aria-label="Shading" className={clsx(DARK, "ml-1.5 flex w-[35px] shrink-0 items-center justify-between rounded-[5px] px-[3px]")}>
          <Icon name="sphere" /><UpDown />
        </button>
        <button aria-label="Pivot point" className={clsx(DARK, "ml-1.5 flex w-[34px] shrink-0 items-center justify-between rounded-[5px] px-[3px]")}>
          <Icon name="pivot" /><UpDown />
        </button>
        <div className="ml-[5px] flex shrink-0">
          <IconToggle name="axes" className="w-5 rounded-l-[5px]" />
          <IconToggle name="arrow" className="-ml-px w-[21px]" />
          <IconToggle name="arc" pressed={false} className="-ml-px w-[21px]" />
          <IconToggle name="scale" pressed={false} className="-ml-px w-[21px]" />
          <Menu label="Orientation" value="Global" className="-ml-px w-[71px]" />
        </div>
        <div className="ml-1.5 flex shrink-0">
          <IconToggle name="vertexSel" className="w-5 rounded-l-[5px]" />
          <IconToggle name="edgeSel" pressed={false} className="-ml-px w-[21px]" />
          <IconToggle name="faceSel" pressed={false} className="-ml-px w-[21px] rounded-r-[5px]" />
        </div>
        <IconToggle name="editCube" className="ml-[5px] w-5 rounded-l-[5px]" />
        <CornerRidges className="bottom-0 left-0" />
      </header>
    </section>
  );
}

const FRAMES = [-40, -20, 0, 20, 40, 60, 80, 100, 120, 140, 160, 180, 200, 220, 240, 260];
const TICKS = Array.from({ length: 34 }, (_, i) => i * 10 - 50);

// Position of a frame on the 1000 unit wide track.
const frameX = (f: number) => Math.round(170 + f * 2.93) + 0.5;
const labelX = (f: number) => Math.round((f < 0 ? 169 : 171) + f * 2.9);

function Timeline() {
  return (
    <section className="relative shrink-0 border-t border-black bg-[#727272]">
      <svg viewBox="0 0 1000 68" preserveAspectRatio="none" className="block h-[68px] w-full">
        <path d="M0 0h1000v68H0z" fill="#434343" />
        <path d="M170 0h586v68H170z" fill="#737373" />
        {TICKS.map((f) => (
          <path key={f} d={`M${frameX(f)} 0v68`} stroke="#000" strokeOpacity={f % 20 === 0 ? 0.22 : 0.08} />
        ))}
        <path d="M170.500 0v68" stroke="#111" />
        <path d="M172.500 0v68" stroke="#39b52a" strokeWidth="3" />
        <path d="M172.500 0v68M287.500 0v68M404.500 0v68" stroke="#dede10" />
      </svg>
      <div className="relative mx-1 mt-px h-[14px] rounded-full border border-[#444] bg-linear-to-b from-[#858585] to-[#757575]">
        <span className="absolute left-[2px] top-[2px] size-2 rounded-full bg-[#5a5a5a]" />
        <span className="absolute right-[2px] top-[2px] size-2 rounded-full bg-[#5a5a5a]" />
      </div>
      <div className="pointer-events-none absolute inset-x-0 top-[70px] h-[14px] leading-[14px]">
        {FRAMES.map((f) => (
          <span key={f} className="absolute -translate-x-1/2" style={{ left: `${labelX(f) / 10}%` }}>{f}</span>
        ))}
      </div>
      <header className="mt-[3px] flex h-[26px] items-center overflow-hidden border-t border-[#5e5e5e] bg-[#6b6b6b] pl-[9px]">
        <EditorType icon="clock" label="Editor type" />
        <CollapseMenus />
        <Menus items={["View", "Marker", "Frame", "Playback"]} />
        <IconToggle name="clockRange" pressed={false} className="ml-4 w-5 rounded-[4px]" />
        <div className="ml-1.5 flex shrink-0">
          <NumberField label="Start frame" value="Start: 1" className="w-[117px] rounded-l-full" />
          <NumberField label="End frame" value="End: 200" className="-ml-px w-[111px] rounded-r-full" />
        </div>
        <NumberField label="Current frame" value="1" className="ml-1.5 w-[89px] shrink-0 rounded-full" />
        <div className="ml-4 flex shrink-0">
          {["first", "prevKey", "playBack", "play", "nextKey", "last"].map((n, i) => (
            <IconToggle
              key={n}
              name={n}
              pressed={false}
              className={clsx(i > 0 ? "-ml-px w-[21px]" : "w-5 rounded-l-[5px]", i === 5 && "rounded-r-[5px]")}
            />
          ))}
        </div>
        <Menu label="Sync" value="No Sync" className="ml-[5px] w-[110px] shrink-0" />
        <div className="ml-[17px] flex shrink-0">
          <IconToggle name="record" pressed={false} className="w-5 rounded-l-[5px]" />
          <IconToggle name="keys" pressed={false} className="-ml-px w-[21px] rounded-r-[5px]" />
        </div>
        <div className="relative ml-[5px] flex min-w-[73px] flex-1">
          <input aria-label="Keying set" className={clsx(FIELD, "w-full rounded-l-[5px] border-r-0 pl-6")} />
          <Icon name="keys" className="absolute left-1 top-[2px]" />
        </div>
      </header>
      <CornerRidges className="right-0 top-0" />
      <CornerRidges className="bottom-0 left-0" />
    </section>
  );
}

type OutlinerItem = { name: string; icon: string; extra: string[]; expand: boolean; halo?: string; toggles: boolean };

const ITEMS: OutlinerItem[] = [
  { name: "RenderLayers", icon: "layers", extra: ["layers"], expand: true, toggles: false },
  { name: "World", icon: "world", extra: [], expand: false, halo: "bg-[#9a9aa8]", toggles: false },
  { name: "Camera", icon: "camera", extra: ["cameraData"], expand: true, toggles: true },
  { name: "Cube", icon: "meshOrange", extra: ["mesh", "wrench"], expand: true, toggles: true },
  { name: "Lamp", icon: "lamp", extra: ["lampData"], expand: true, toggles: true },
  { name: "Plane", icon: "meshOrange", extra: ["curve", "mesh", "wrench"], expand: true, halo: "bg-[#b98a52]", toggles: true },
];

function Expander({ open }: { open?: boolean }) {
  return (
    <svg viewBox="0 0 10 10" className="relative z-10 size-2.5 shrink-0" aria-hidden="true">
      <circle cx="5" cy="5" r="4.200" fill="#e8e8e8" stroke="#222" strokeWidth=".9" />
      <path d={open ? "M3 5h4" : "M3 5h4M5 3v4"} stroke="#111" />
    </svg>
  );
}

// Which of the linked data icons sit on a light disc.
function hasDisc(item: string, icon: string) {
  return icon === "layers" || icon === "cameraData" || (item === "Plane" && icon === "mesh");
}

function Outliner() {
  return (
    <section className="relative border-b border-black bg-[#727272]">
      <header className="flex h-[26px] items-center overflow-hidden border-b border-[#5e5e5e] bg-[#6b6b6b] pl-2 pt-px">
        <EditorType icon="tree" label="Editor type" />
        <CollapseMenus />
        <Menus items={["View", "Search"]} />
        <Menu label="Display mode" value="All Scenes" className="ml-[13px] w-[111px] shrink-0" />
        <div className="relative ml-1.5 flex min-w-0 flex-1">
          <input aria-label="Filter" className={clsx(FIELD, "w-full rounded-l-[5px] border-r-0 pl-6")} />
          <Icon name="search" className="absolute left-[3px] top-[2px]" />
        </div>
      </header>
      <ul className="relative mr-[15px] mt-[2px] pb-[27px]">
        <li aria-hidden="true" className="absolute left-[27px] top-5 h-[110px] w-px bg-[#484848]" />
        <li className="mr-[60px] flex h-5 items-center bg-[#7d828c] pl-[3px]">
          <Expander open />
          <span className="ml-1.5 flex size-[18px] items-center justify-center rounded-full bg-[#a9abb0]"><Icon name="scene" /></span>
          <span className="ml-[3px] pt-0.5">Scene</span>
        </li>
        {ITEMS.map((it, i) => (
          <li key={it.name} className={clsx("flex h-5 items-center", i % 2 === 0 && "bg-[#797979]", i === 0 ? "pl-7" : "pl-[22px]")}>
            <span className={clsx("size-2.5", !it.expand && "invisible")}><Expander /></span>
            <span className={clsx("flex size-[18px] items-center justify-center rounded-full", i === 0 ? "ml-[1px]" : "ml-[7px]", it.halo)}>
              <Icon name={it.icon} />
            </span>
            <span className={clsx("ml-[3px] pt-0.5", it.name === "Plane" && "text-white")}>{it.name}</span>
            {it.extra.length > 0 && <span className="ml-[11px] mr-1 h-3 w-0.5 bg-[#575757]" />}
            {it.extra.map((e) => (
              <span key={e} className={clsx("ml-[2px] flex size-[18px] items-center justify-center rounded-full", hasDisc(it.name, e) && "bg-[#a5a5a5]")}>
                <Icon name={e} className={e === "mesh" || e === "cameraData" || e === "lampData" ? "opacity-60" : ""} />
              </span>
            ))}
            {it.toggles && (
              <span className="ml-auto flex">
                {["eye", "cursor", "photo"].map((t) => (
                  <button key={t} aria-label={`${it.name} ${t}`} className="flex w-5 items-center justify-center">
                    <Icon name={t} className={t === "cursor" ? "" : "size-3.5"} />
                  </button>
                ))}
                <span className="w-px" />
              </span>
            )}
          </li>
        ))}
        <li aria-hidden="true" className="h-5 bg-[#797979]" />
        <li aria-hidden="true" className="pointer-events-none absolute bottom-0 right-[19px] top-0 flex w-[41px] justify-between">
          <span className="w-px bg-[#606060]" /><span className="w-px bg-[#606060]" /><span className="w-px bg-[#606060]" />
        </li>
      </ul>
      <CornerRidges className="right-0 top-0" />
      <CornerRidges className="bottom-0 left-0" />
    </section>
  );
}

function Physics() {
  return (
    <section className="relative flex-1 bg-[#727272] pb-6">
      <PropertiesHeader active="physics" />
      <ContextPath />
      <div className="ml-1 mr-[21px]">
        <div className="px-[3px]">
          <p className="mt-[11px] flex h-5 items-center pl-[5px] pt-0.5">Enable physics for:</p>
          <div className="mt-1 grid grid-cols-2 gap-x-2 gap-y-0.5 pb-[7px]">
            <TextButton icon="force">Force Field</TextButton>
            <TextButton icon="softBody">Soft Body</TextButton>
            <TextButton icon="collision">Collision</TextButton>
            <TextButton icon="fluid">Fluid</TextButton>
            <TextButton icon="cloth">Cloth</TextButton>
            <TextButton icon="smoke">Smoke</TextButton>
            <div className="flex">
              <button className={clsx(RAISED, "flex min-w-0 flex-1 items-center whitespace-nowrap rounded-l-[5px] pl-[3px]")}>
                <Icon name="cross" className="mr-1 p-px" /><span className="pt-0.5">Dynamic Paint</span>
              </button>
              <IconToggle name="photo" className="-ml-px w-[22px]" />
              <IconToggle name="eye" className="-ml-px w-[21px] rounded-r-[5px]" />
            </div>
          </div>
        </div>

        <PanelTitle title="Dynamic Paint" />
        <div className="px-[3px] pb-[7px] pt-[9px]">
          <div className="relative grid grid-cols-2">
            <button className={clsx(DARK, "rounded-l-[5px] pt-0.5 text-white")}>Canvas</button>
            <button className={clsx(ACTIVE, "rounded-r-[5px] border-l-0 pt-0.5")}>Brush</button>
            <div className="pointer-events-none absolute -right-[3px] -top-1 h-[29px] w-[155px] rounded-[7px] border-4 border-[#00ff00]" />
            <div className="pointer-events-none absolute left-[178px] -top-[54px] text-[36px] font-bold leading-[42px] text-[#00ff00] [font-family:'DejaVu_Sans',sans-serif]">3</div>
          </div>
          <TextButton icon="cross" className="mt-[5px] w-full">Remove Brush</TextButton>
          <div className="mt-[5px] grid grid-cols-2 gap-x-2 gap-y-0.5">
            <div className="pl-[3px]"><Check label="Absolute Alpha" on /></div>
            <div className="pl-[3px]"><Check label="Use object material" /></div>
            <div className="pl-[3px]"><Check label="Erase Paint" /></div>
            <button aria-label="Paint color" className="h-5 rounded-[5px] border border-[#3a3a3a] bg-[#2462cd]" />
            <NumberField label="Wetness" value="Wetness: 1.00" className="rounded-full" />
            <NumberField label="Alpha" value="Alpha: 1.00" className="rounded-full" />
          </div>
        </div>

        <PanelTitle title="Dynamic Paint Source" />
        <div className="flex items-center px-[3px] pb-[7px] pt-[9px]">
          <span className="w-[104px] shrink-0 pl-[5px] pt-0.5">Paint Source:</span>
          <Menu label="Paint source" value="Mesh Volume" icon="meshVolume" className="flex-1" />
        </div>
        <PanelTitle title="Dynamic Paint Velocity" open={false} />
        <PanelTitle title="Dynamic Paint Waves" open={false} />
      </div>
      <CornerRidges className="right-0 top-0" />
    </section>
  );
}

function WindowButton({ label, d }: { label: string; d: string }) {
  return (
    <button aria-label={label} className="flex h-3.5 w-4 items-center justify-center border border-b-[#404040] border-l-white border-r-[#404040] border-t-white bg-[#d4d0c8]">
      <svg viewBox="0 0 10 10" className="size-2.5"><path d={d} fill="none" stroke="#000" strokeWidth="1.600" /></svg>
    </button>
  );
}

export default function App() {
  return (
    <div className="flex min-h-screen flex-col overflow-hidden border-4 border-[#d4d0c8] bg-[#727272] text-[11px] leading-[14px] text-black [font-family:'DejaVu_Sans_Condensed','DejaVu_Sans',sans-serif]">
      <div className="flex h-[19px] shrink-0 items-center border-b border-[#d4d0c8] bg-linear-to-r from-[#0a246a] to-[#a6caf0] pl-[2px] pr-[2px]">
        <Icon name="blender" />
        <h1 className="ml-px pt-px text-[11px] font-bold text-white">Blender</h1>
        <div className="ml-auto flex">
          <WindowButton label="Minimize" d="M1 8.500h5" />
          <WindowButton label="Maximize" d="M1 1.500h8v7H1z" />
          <span className="w-0.5" />
          <WindowButton label="Close" d="M1.500 1.500l7 7M8.500 1.500l-7 7" />
        </div>
      </div>

      <header className="relative flex h-[34px] shrink-0 items-end overflow-hidden whitespace-nowrap border-b border-black bg-[#727272]">
        <div className="flex h-[27px] w-full items-center border-t border-[#5e5e5e] bg-[#6b6b6b] pl-[9px]">
          <EditorType icon="info" label="Editor type" />
          <CollapseMenus />
          <Menus items={["File", "Add", "Render", "Help"]} />
          <div className="ml-[14px] flex shrink-0 gap-1.5">
            <DataBlock icon="layout" label="Screen" value="Default" />
            <DataBlock icon="scene" label="Scene" value="Scene" />
          </div>
          <Menu label="Render engine" value="Blender Render" className="ml-[17px] w-[111px] shrink-0" />
          <Icon name="blender" className="ml-[18px]" />
          <span className="ml-[7px] w-[297px] shrink-0 pt-0.5">blender.org 261 | Ve:92-92 | Ed:180-180 | Fa:90-90 | Plane</span>
          <button aria-label="Back to previous" className={clsx(RAISED, "ml-[29px] flex w-5 shrink-0 items-center justify-center rounded-[4px]")}>
            <Icon name="full" />
          </button>
        </div>
        <CornerRidges className="right-0 top-0" />
        <CornerRidges className="bottom-0 left-0" />
      </header>

      <main className="flex min-h-0 flex-1">
        <div className="flex min-w-0 flex-1 flex-col border-r-2 border-black">
          <div className="flex min-h-0 flex-1">
            <Viewport />
            <Modifiers />
          </div>
          <Timeline />
        </div>
        <aside className="flex w-[332px] shrink-0 flex-col">
          <Outliner />
          <Physics />
        </aside>
      </main>
    </div>
  );
}
